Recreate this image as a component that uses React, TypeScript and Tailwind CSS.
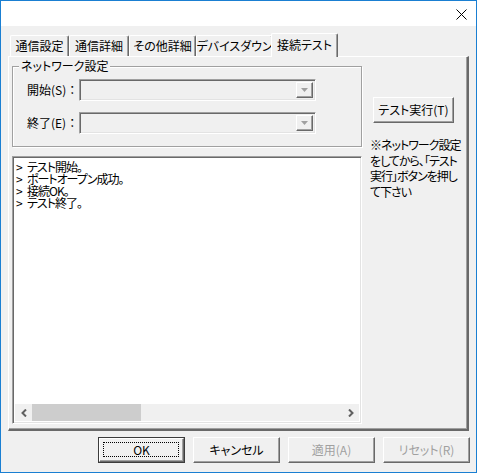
import React from "react";

const raised =
  "border border-t-white border-l-white border-r-[#696969] border-b-[#696969] shadow-[inset_-1px_-1px_0_#a0a0a0]";
const sunken =
  "border border-t-[#a0a0a0] border-l-[#a0a0a0] border-r-white border-b-white shadow-[inset_1px_1px_0_#696969,inset_-1px_-1px_0_#e3e3e3]";

function Combo() {
  return (
    <div className={`w-[237px] h-[22px] bg-[#f0f0f0] flex justify-end p-[2px] ${sunken}`}>
      <div className={`w-[17px] h-full bg-[#f0f0f0] flex items-center justify-center ${raised}`}>
        <svg width="7" height="4" viewBox="0 0 7 4">
          <path d="M0 0H7L3.5 4Z" fill="#a0a0a0" />
        </svg>
      </div>
    </div>
  );
}

function Tab({ label, w }: { label: string; w: string }) {
  return (
    <div
      className={`${w} h-[21px] flex items-center justify-center whitespace-nowrap border-l border-t border-r border-l-white border-t-white border-r-[#696969] rounded-t-[2px] shadow-[inset_-1px_0_0_#a0a0a0] text-black`}
    >
      {label}
    </div>
  );
}

function Btn({
  label,
  disabled,
  def,
}: {
  label: string;
  disabled?: boolean;
  def?: boolean;
}) {
  if (def) {
    return (
      <div className="w-[87px] h-[26px] border border-[#3c3c3c] bg-[#f0f0f0]">
        <div className={`w-full h-full relative flex items-center justify-center ${raised}`}>
          <div className="absolute left-[3px] top-[3px] right-[4px] bottom-[4px] border border-dotted border-black" />
          <span className="text-black">{label}</span>
        </div>
      </div>
    );
  }
  return (
    <div
      className={`w-[87px] h-[26px] flex items-center justify-center whitespace-nowrap bg-[#f0f0f0] ${raised} ${
        disabled ? "text-[#a0a0a0]" : "text-black"
      }`}
    >
      {label}
    </div>
  );
}

function LogLine({ text }: { text: string }) {
  return (
    <div className="flex">
      <span className="w-[11px] tracking-normal">&gt;</span>
      <span>{text}</span>
    </div>
  );
}

export default function App() {
  return (
    <div className="w-[477px] h-[473px] border border-[#1a7fd2] bg-[#f0f0f0] flex flex-col font-['Noto_Sans_CJK_JP',sans-serif] text-[12px] leading-[14px] [font-feature-settings:'palt'] text-black overflow-hidden">
      {/* title bar */}
      <div className="h-[25px] bg-white flex items-start justify-end pr-[9px] pt-[8px]">
        <svg width="11" height="11" viewBox="0 0 11 11">
          <path d="M0.5 0.5L10.5 10.5M10.5 0.5L0.5 10.5" stroke="#000" strokeWidth="1" />
        </svg>
      </div>

      {/* body */}
      <div className="pt-[7px] pl-[7px]">
        {/* tabs */}
        <div className="relative z-10 h-[23px] flex items-end pl-[2px]">
          <Tab label="通信設定" w="w-[59px]" />
          <Tab label="通信詳細" w="w-[60px]" />
          <Tab label="その他詳細" w="w-[67px]" />
          <Tab label="デバイスダウン" w="w-[77px]" />
          <div className="ml-[-2px] mb-[-1px] w-[67px] h-[24px] bg-[#f0f0f0] flex items-center justify-center whitespace-nowrap border-l border-t border-r border-l-white border-t-white border-r-[#696969] rounded-t-[2px] shadow-[inset_-1px_0_0_#a0a0a0] pb-[2px]">
            接続テスト
          </div>
        </div>

        {/* panel */}
        <div className="w-[461px] h-[375px] border-l border-t border-r-2 border-b-2 border-l-white border-t-white border-r-[#696969] border-b-[#696969] shadow-[inset_-1px_-1px_0_#a0a0a0] flex pl-[3px]">
          {/* left column */}
          <div className="w-[350px] flex flex-col">
            {/* group box */}
            <div className="relative mt-[9px] h-[81px] border border-[#a0a0a0] shadow-[inset_1px_1px_0_#fff,1px_1px_0_#fff] flex flex-col pl-[14px] pt-[12px] gap-[11px]">
              <div className="absolute left-[6px] top-[-8px] px-[2px] bg-[#f0f0f0] leading-[14px] whitespace-nowrap">
                ネットワーク設定
              </div>
              <div className="flex items-center">
                <div className="w-[52px] whitespace-nowrap [font-feature-settings:normal]">開始(S)：</div>
                <Combo />
              </div>
              <div className="flex items-center">
                <div className="w-[52px] whitespace-nowrap [font-feature-settings:normal]">終了(E)：</div>
                <Combo />
              </div>
            </div>

            {/* log */}
            <div className={`mt-[9px] h-[268px] bg-white flex flex-col p-[2px] ${sunken}`}>
              <div className="flex-1 pl-[1px] pt-[2px] leading-[12px] whitespace-nowrap tracking-[-1px]">
                <LogLine text="テスト開始。" />
                <LogLine text="ポートオープン成功。" />
                <LogLine text="接続OK。" />
                <LogLine text="テスト終了。" />
              </div>
              <div className="h-[17px] flex bg-[#f0f0f0]">
                <div className="w-[17px] h-full flex items-center justify-center">
                  <svg width="6" height="8" viewBox="0 0 6 8">
                    <path d="M5 0.5L1.5 4L5 7.5" stroke="#606060" strokeWidth="2" fill="none" />
                  </svg>
                </div>
                <div className="w-[109px] h-full bg-[#cdcdcd]" />
                <div className="flex-1" />
                <div className="w-[17px] h-full flex items-center justify-center">
                  <svg width="6" height="8" viewBox="0 0 6 8">
                    <path d="M1 0.5L4.5 4L1 7.5" stroke="#606060" strokeWidth="2" fill="none" />
                  </svg>
                </div>
              </div>
            </div>
          </div>

          {/* right column */}
          <div className="ml-[8px] flex flex-col">
            <div className={`ml-[3px] mt-[40px] w-[81px] h-[26px] flex items-center justify-center whitespace-nowrap bg-[#f0f0f0] ${raised}`}>
              テスト実行(T)
            </div>
            <div className="mt-[14px] leading-[15.5px] whitespace-nowrap tracking-[-1px]">
              ※ネットワーク設定
              <br />
              をしてから、「テスト
              <br />
              実行」ボタンを押し
              <br />
              て下さい
            </div>
          </div>
        </div>

        {/* bottom buttons */}
        <div className="mt-[6px] flex gap-[8px] pl-[90px]">
          <Btn label="OK" def />
          <Btn label="キャンセル" />
          <Btn label="適用(A)" disabled />
          <Btn label="リセット(R)" disabled />
        </div>
      </div>
    </div>
  );
}
